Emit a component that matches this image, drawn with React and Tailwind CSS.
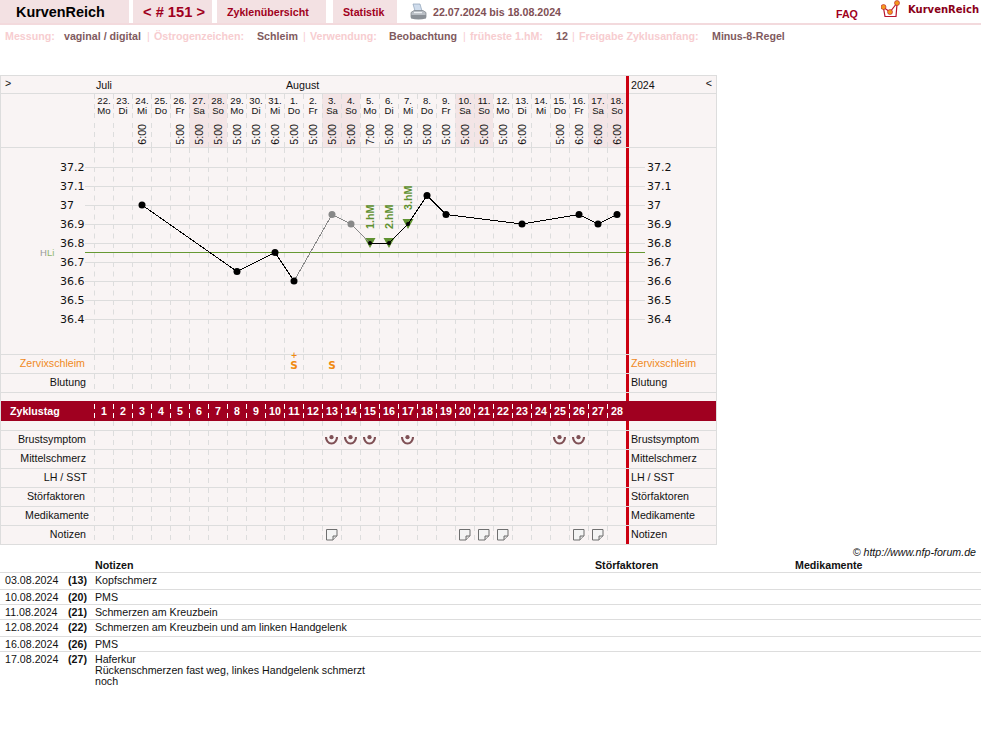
import React from 'react';

const dayInfo = [
  ['22.', 'Mo', ''], ['23.', 'Di', ''], ['24.', 'Mi', '6:00'], ['25.', 'Do', ''], ['26.', 'Fr', '5:00'],
  ['27.', 'Sa', '5:00'], ['28.', 'So', '5:00'], ['29.', 'Mo', '5:00'], ['30.', 'Di', '5:00'], ['31.', 'Mi', '6:00'],
  ['1.', 'Do', '5:00'], ['2.', 'Fr', '5:00'], ['3.', 'Sa', '5:00'], ['4.', 'So', '5:00'], ['5.', 'Mo', '7:00'],
  ['6.', 'Di', '5:00'], ['7.', 'Mi', '5:00'], ['8.', 'Do', '5:00'], ['9.', 'Fr', '5:00'], ['10.', 'Sa', '5:00'],
  ['11.', 'So', '5:00'], ['12.', 'Mo', '5:00'], ['13.', 'Di', '6:00'], ['14.', 'Mi', ''], ['15.', 'Do', '5:00'],
  ['16.', 'Fr', '6:00'], ['17.', 'Sa', '6:00'], ['18.', 'So', '6:00'],
];

const days = Array.from({ length: 28 }, (_, i) => i + 1);
const dashed = 'bg-[repeating-linear-gradient(to_bottom,#dddddd_0,#dddddd_5px,transparent_5px,transparent_9.5px)] bg-[length:1px_100%] bg-no-repeat';
const rowGrid = 'grid grid-cols-[93px_repeat(28,19px)_3px_87px]';

const scale = [
  ['37.2', 167], ['37.1', 186], ['37', 205], ['36.9', 224], ['36.8', 243],
  ['36.7', 262], ['36.6', 281], ['36.5', 300], ['36.4', 319],
];

// temperature points, day -> y
const blackPts = [[142, 205], [237, 271.5], [275, 252.5], [294, 281]];
const grayPts = [[294, 281], [332, 214.5], [351, 224], [370, 243]];
const lastPts = [[370, 243], [389, 243], [408, 224], [427, 195.5], [446, 214.5], [522, 224], [579, 214.5], [598, 224], [617, 214.5]];

const toLine = (pts) => pts.map((p) => p.join(',')).join(' ');

const Chart = () => (
  <svg width="715" height="206" viewBox="1 148 715 206" className="block">
    {scale.map(([label, y]) => (
      <line key={label} x1="85" x2="645" y1={y + 0.5} y2={y + 0.5} stroke="#dddddd" />
    ))}
    {days.map((d) => (
      <line key={d} x1={94.5 + 19 * (d - 1)} x2={94.5 + 19 * (d - 1)} y1="148" y2="354" stroke="#dddddd" strokeDasharray="5 4.5" />
    ))}
    <line x1="85" x2="645" y1="252.5" y2="252.5" stroke="#669933" />
    {scale.map(([label, y]) => (
      <g key={label} fontFamily="DejaVu Sans" fontSize="11" fill="#111111">
        <text x="60" y={y + 4}>{label}</text>
        <text x="647" y={y + 4}>{label}</text>
      </g>
    ))}
    <text x="40" y="256" fontFamily="Liberation Sans" fontSize="9.5" fill="#9a9a9a">H<tspan fill="#8fb56a">Li</tspan></text>

    {[370, 389, 408].map((x, i) => (
      <polygon key={x} points={`${x - 5.5},${i === 2 ? 219 : 238} ${x + 5.5},${i === 2 ? 219 : 238} ${x},${i === 2 ? 229 : 248}`} fill="#5f9130" />
    ))}
    <polyline points={toLine(blackPts)} fill="none" stroke="#000000" shapeRendering="crispEdges" />
    <polyline points={toLine(grayPts)} fill="none" stroke="#888888" shapeRendering="crispEdges" />
    <polyline points={toLine(lastPts)} fill="none" stroke="#000000" shapeRendering="crispEdges" />
    {blackPts.map(([x, y]) => <circle key={x} cx={x} cy={y} r="3.5" fill="#000000" />)}
    {grayPts.slice(1, 3).map(([x, y]) => <circle key={x} cx={x} cy={y} r="3.5" fill="#888888" />)}
    {lastPts.map(([x, y], i) => <circle key={x} cx={x} cy={y} r={i < 3 ? 2 : 3.5} fill="#000000" />)}

    {[['1.hM', 374, 229], ['2.hM', 393, 229], ['3.hM', 412, 210]].map(([t, x, y]) => (
      <text key={t} transform={`translate(${x},${y}) rotate(-90)`} fontFamily="Liberation Sans" fontWeight="bold" fontSize="10.67" fill="#5f9130">{t}</text>
    ))}
    <rect x="626" y="148" width="3" height="206" fill="#cc0011" />
  </svg>
);

const BreastIcon = () => (
  <svg width="13" height="10" viewBox="0 0 13 10" className="block -ml-[1px]">
    <circle cx="6.5" cy="2.2" r="2.1" fill="#7f5055" />
    <path d="M1 2 A5.5 6.5 0 0 0 12 2" fill="none" stroke="#7f5055" strokeWidth="2.1" />
  </svg>
);

const NoteIcon = () => (
  <svg width="12" height="12" viewBox="0 0 12 12" className="block">
    <path d="M.5.5H11V7L7 11H.5Z" fill="#f4f4f4" stroke="#6f6f6f" />
    <path d="M7 11V7H11" fill="#dddddd" stroke="#6f6f6f" />
  </svg>
);

const Row = ({ label, labelClass = 'text-[#111111]', pad = 'pr-[8px]', cells = {} }) => (
  <div className={`${rowGrid} h-[19px] border-b border-[#dddddd]`}>
    <div className={`text-right leading-[16px] ${pad} ${labelClass}`}>{label}</div>
    {days.map((d) => (
      <div key={d} className={`${dashed} flex items-center justify-center pl-[1px]`}>{cells[d]}</div>
    ))}
    <div className="bg-[#cc0011]" />
    <div className={`pl-[2px] leading-[16px] ${labelClass}`}>{label}</div>
  </div>
);

const SignS = ({ plus }) => (
  <div className="relative font-['DejaVu_Sans'] font-bold text-[10.5px] leading-none text-[#f08a10] mt-[3px]">
    S
    {plus && <span className="absolute left-0 right-0 -top-[8px] text-center text-[8px] leading-none">+</span>}
  </div>
);

const metaItems = [
  ['Messung:', 'w-[59px] text-[#f7cdd0]'],
  ['vaginal / digital', 'w-[83px] text-[#7f5a5e]'],
  ['|', 'w-[7px] text-[#f7cdd0] font-normal'],
  ['Östrogenzeichen:', 'w-[103px] text-[#f7cdd0]'],
  ['Schleim', 'w-[46px] text-[#7f5a5e]'],
  ['|', 'w-[7px] text-[#f7cdd0] font-normal'],
  ['Verwendung:', 'w-[79px] text-[#f7cdd0]'],
  ['Beobachtung', 'w-[74px] text-[#7f5a5e]'],
  ['|', 'w-[7px] text-[#f7cdd0] font-normal'],
  ['früheste 1.hM:', 'w-[86px] text-[#f7cdd0]'],
  ['12', 'w-[16px] text-[#7f5a5e]'],
  ['|', 'w-[7px] text-[#f7cdd0] font-normal'],
  ['Freigabe Zyklusanfang:', 'w-[133px] text-[#f7cdd0]'],
  ['Minus-8-Regel', 'text-[#7f5a5e]'],
];

const notes = [
  ['03.08.2024', '(13)', 'Kopfschmerz', 'h-[17px]'],
  ['10.08.2024', '(20)', 'PMS', 'h-[15px]'],
  ['11.08.2024', '(21)', 'Schmerzen am Kreuzbein', 'h-[15px]'],
  ['12.08.2024', '(22)', 'Schmerzen am Kreuzbein und am linken Handgelenk', 'h-[17px]'],
  ['16.08.2024', '(26)', 'PMS', 'h-[15px]'],
];

const noteGrid = 'grid grid-cols-[63px_27px_500px_200px_1fr] pl-[5px]';

export default function App() {
  return (
    <div className="w-[981px] h-[732px] bg-white font-['Liberation_Sans',sans-serif] text-[10.67px] text-[#111111] overflow-hidden">
      {/* top nav */}
      <div className="flex h-[25px] border-b-2 border-[#f3dadd]">
        <div className="w-[129px] bg-[#f3e1e3] pl-[16px] font-bold text-[14.4px] leading-[25px] text-black">KurvenReich</div>
        <div className="w-[79px] ml-[4px] bg-[#f3e1e3] pl-[10px] font-bold text-[14.67px] leading-[25px] text-[#a00020]">&lt; # 151 &gt;</div>
        <div className="w-[109px] ml-[5px] bg-[#f3e1e3] pl-[10px] font-bold leading-[24px] text-[#a00020]">Zyklenübersicht</div>
        <div className="w-[64px] ml-[7px] bg-[#f3e1e3] pl-[10px] font-bold leading-[24px] text-[#a00020]">Statistik</div>
        <svg width="17" height="18" viewBox="0 0 17 18" className="ml-[13px] mt-[3px]">
          <path d="M3 1H10L12 8H5Z" fill="#cfdcec" stroke="#8ea2b8" strokeWidth=".7" />
          <path d="M1 9.5L4 7.5H13L16 9.5V14.5H1Z" fill="#b9bec4" stroke="#7d8288" strokeWidth=".7" />
          <path d="M1 12H16V15.5Q8.5 17.5 1 15.5Z" fill="#8b9096" />
          <rect x="4" y="9" width="8" height="1.2" fill="#eef1f4" />
        </svg>
        <div className="ml-[6px] font-bold leading-[24px] text-[#7f5055]">22.07.2024 bis 18.08.2024</div>
        <div className="ml-auto flex">
          <div className="w-[45px] pt-[9px] font-bold leading-[11px] text-[#a00020]">FAQ</div>
          <svg width="20" height="20" viewBox="0 0 20 20" className="mr-[7px]">
            <path d="M2.5 8L4 16.5H15L16 4" fill="none" stroke="#b8122e" strokeWidth="1.2" />
            <path d="M2 7L9 12L16 3" fill="none" stroke="#b8122e" strokeWidth="1.2" />
            <circle cx="2.5" cy="7" r="2.5" fill="#f29a1f" stroke="#b8122e" strokeWidth=".6" />
            <circle cx="9" cy="12" r="2.5" fill="#f29a1f" stroke="#b8122e" strokeWidth=".6" />
            <circle cx="16" cy="3" r="2.5" fill="#f29a1f" stroke="#b8122e" strokeWidth=".6" />
          </svg>
          <div className="w-[73px] pt-[4px] font-['DejaVu_Sans'] font-bold text-[10px] leading-[12px] whitespace-nowrap text-[#8a0018]">KurvenReich</div>
        </div>
      </div>

      {/* settings line */}
      <div className="flex h-[22px] mb-[28px] pl-[5px] font-bold leading-[22px]">
        {metaItems.map(([text, cls], i) => (
          <div key={i} className={`${cls} whitespace-nowrap`}>{text}</div>
        ))}
      </div>

      {/* chart table */}
      <div className="w-[717px] border-l border-r border-t border-[#dddddd] bg-[#f9f4f4]">
        <div className={`${rowGrid} h-[18px] border-b border-[#dddddd] leading-[18px]`}>
          <div className="pl-[4px] leading-[15px]">&gt;</div>
          <div className="col-span-10 pl-[2px]">Juli</div>
          <div className="col-span-18 pl-[2px]">August</div>
          <div className="bg-[#cc0011]" />
          <div className="flex justify-between pl-[2px] pr-[4px]">
            <span>2024</span>
            <span className="leading-[15px]">&lt;</span>
          </div>
        </div>

        <div className={`${rowGrid} h-[54px] border-b border-[#dddddd]`}>
          <div />
          {dayInfo.map(([date, wd, time]) => (
            <div key={date + wd} className={`${dashed} ${wd === 'Sa' || wd === 'So' ? 'bg-[#f3e5e6]' : ''} flex flex-col items-center pt-[2px] pl-[1px] text-[9.6px] leading-[10px]`}>
              <span>{date}</span>
              <span>{wd}</span>
              {time && <span className="mt-auto mb-[2px] [writing-mode:vertical-rl] rotate-180 text-[10.67px] leading-[11px]">{time}</span>}
            </div>
          ))}
          <div className="bg-[#cc0011]" />
          <div />
        </div>

        <div className="h-[207px] border-b border-[#dddddd]">
          <Chart />
        </div>

        <Row label="Zervixschleim" labelClass="text-[#f08a1d]" pad="pr-[9px]" cells={{ 11: <SignS plus />, 13: <SignS /> }} />
        <Row label="Blutung" />
        <div className={`${rowGrid} h-[8px]`}>
          <div className="col-span-29" />
          <div className="bg-[#cc0011]" />
        </div>

        <div className={`${rowGrid} h-[20px] bg-[#a00020] text-white font-bold leading-[20px]`}>
          <div className="pl-[9px]">Zyklustag</div>
          {days.map((d) => (
            <div key={d} className="relative text-center pl-[1px]">
              <span className="absolute left-0 top-[3px] bottom-[2px] w-px bg-[repeating-linear-gradient(to_bottom,#ffffff_0,#ffffff_5px,transparent_5px,transparent_9.5px)]" />
              {d}
            </div>
          ))}
          <div />
          <div />
        </div>

        <div className={`${rowGrid} h-[10px] border-b border-[#dddddd]`}>
          <div />
          {days.map((d) => <div key={d} className={dashed} />)}
          <div className="bg-[#cc0011]" />
          <div />
        </div>

        <Row label="Brustsymptom" cells={{ 13: <BreastIcon />, 14: <BreastIcon />, 15: <BreastIcon />, 17: <BreastIcon />, 25: <BreastIcon />, 26: <BreastIcon /> }} />
        <Row label="Mittelschmerz" />
        <Row label="LH / SST" pad="pr-[7px]" />
        <Row label="Störfaktoren" pad="pr-[9px]" />
        <Row label="Medikamente" pad="pr-[5px]" />
        <Row label="Notizen" cells={{ 13: <NoteIcon />, 20: <NoteIcon />, 21: <NoteIcon />, 22: <NoteIcon />, 26: <NoteIcon />, 27: <NoteIcon /> }} />
      </div>

      <div className="h-[13px] pr-[5px] text-right italic leading-[15px]">© http://www.nfp-forum.de</div>

      {/* notes list */}
      <div className={`${noteGrid} h-[15px] border-b border-[#dddddd] font-bold leading-[15px]`}>
        <div />
        <div />
        <div>Notizen</div>
        <div>Störfaktoren</div>
        <div>Medikamente</div>
      </div>
      {notes.map(([date, cd, text, h]) => (
        <div key={date} className={`${noteGrid} ${h} border-b border-[#dddddd] leading-[15px]`}>
          <div>{date}</div>
          <div className="font-bold">{cd}</div>
          <div>{text}</div>
        </div>
      ))}
      <div className={`${noteGrid} pt-[2px] leading-[11px]`}>
        <div>17.08.2024</div>
        <div className="font-bold">(27)</div>
        <div className="max-w-[285px]">Haferkur<br />Rückenschmerzen fast weg, linkes Handgelenk schmerzt noch</div>
      </div>
    </div>
  );
}
